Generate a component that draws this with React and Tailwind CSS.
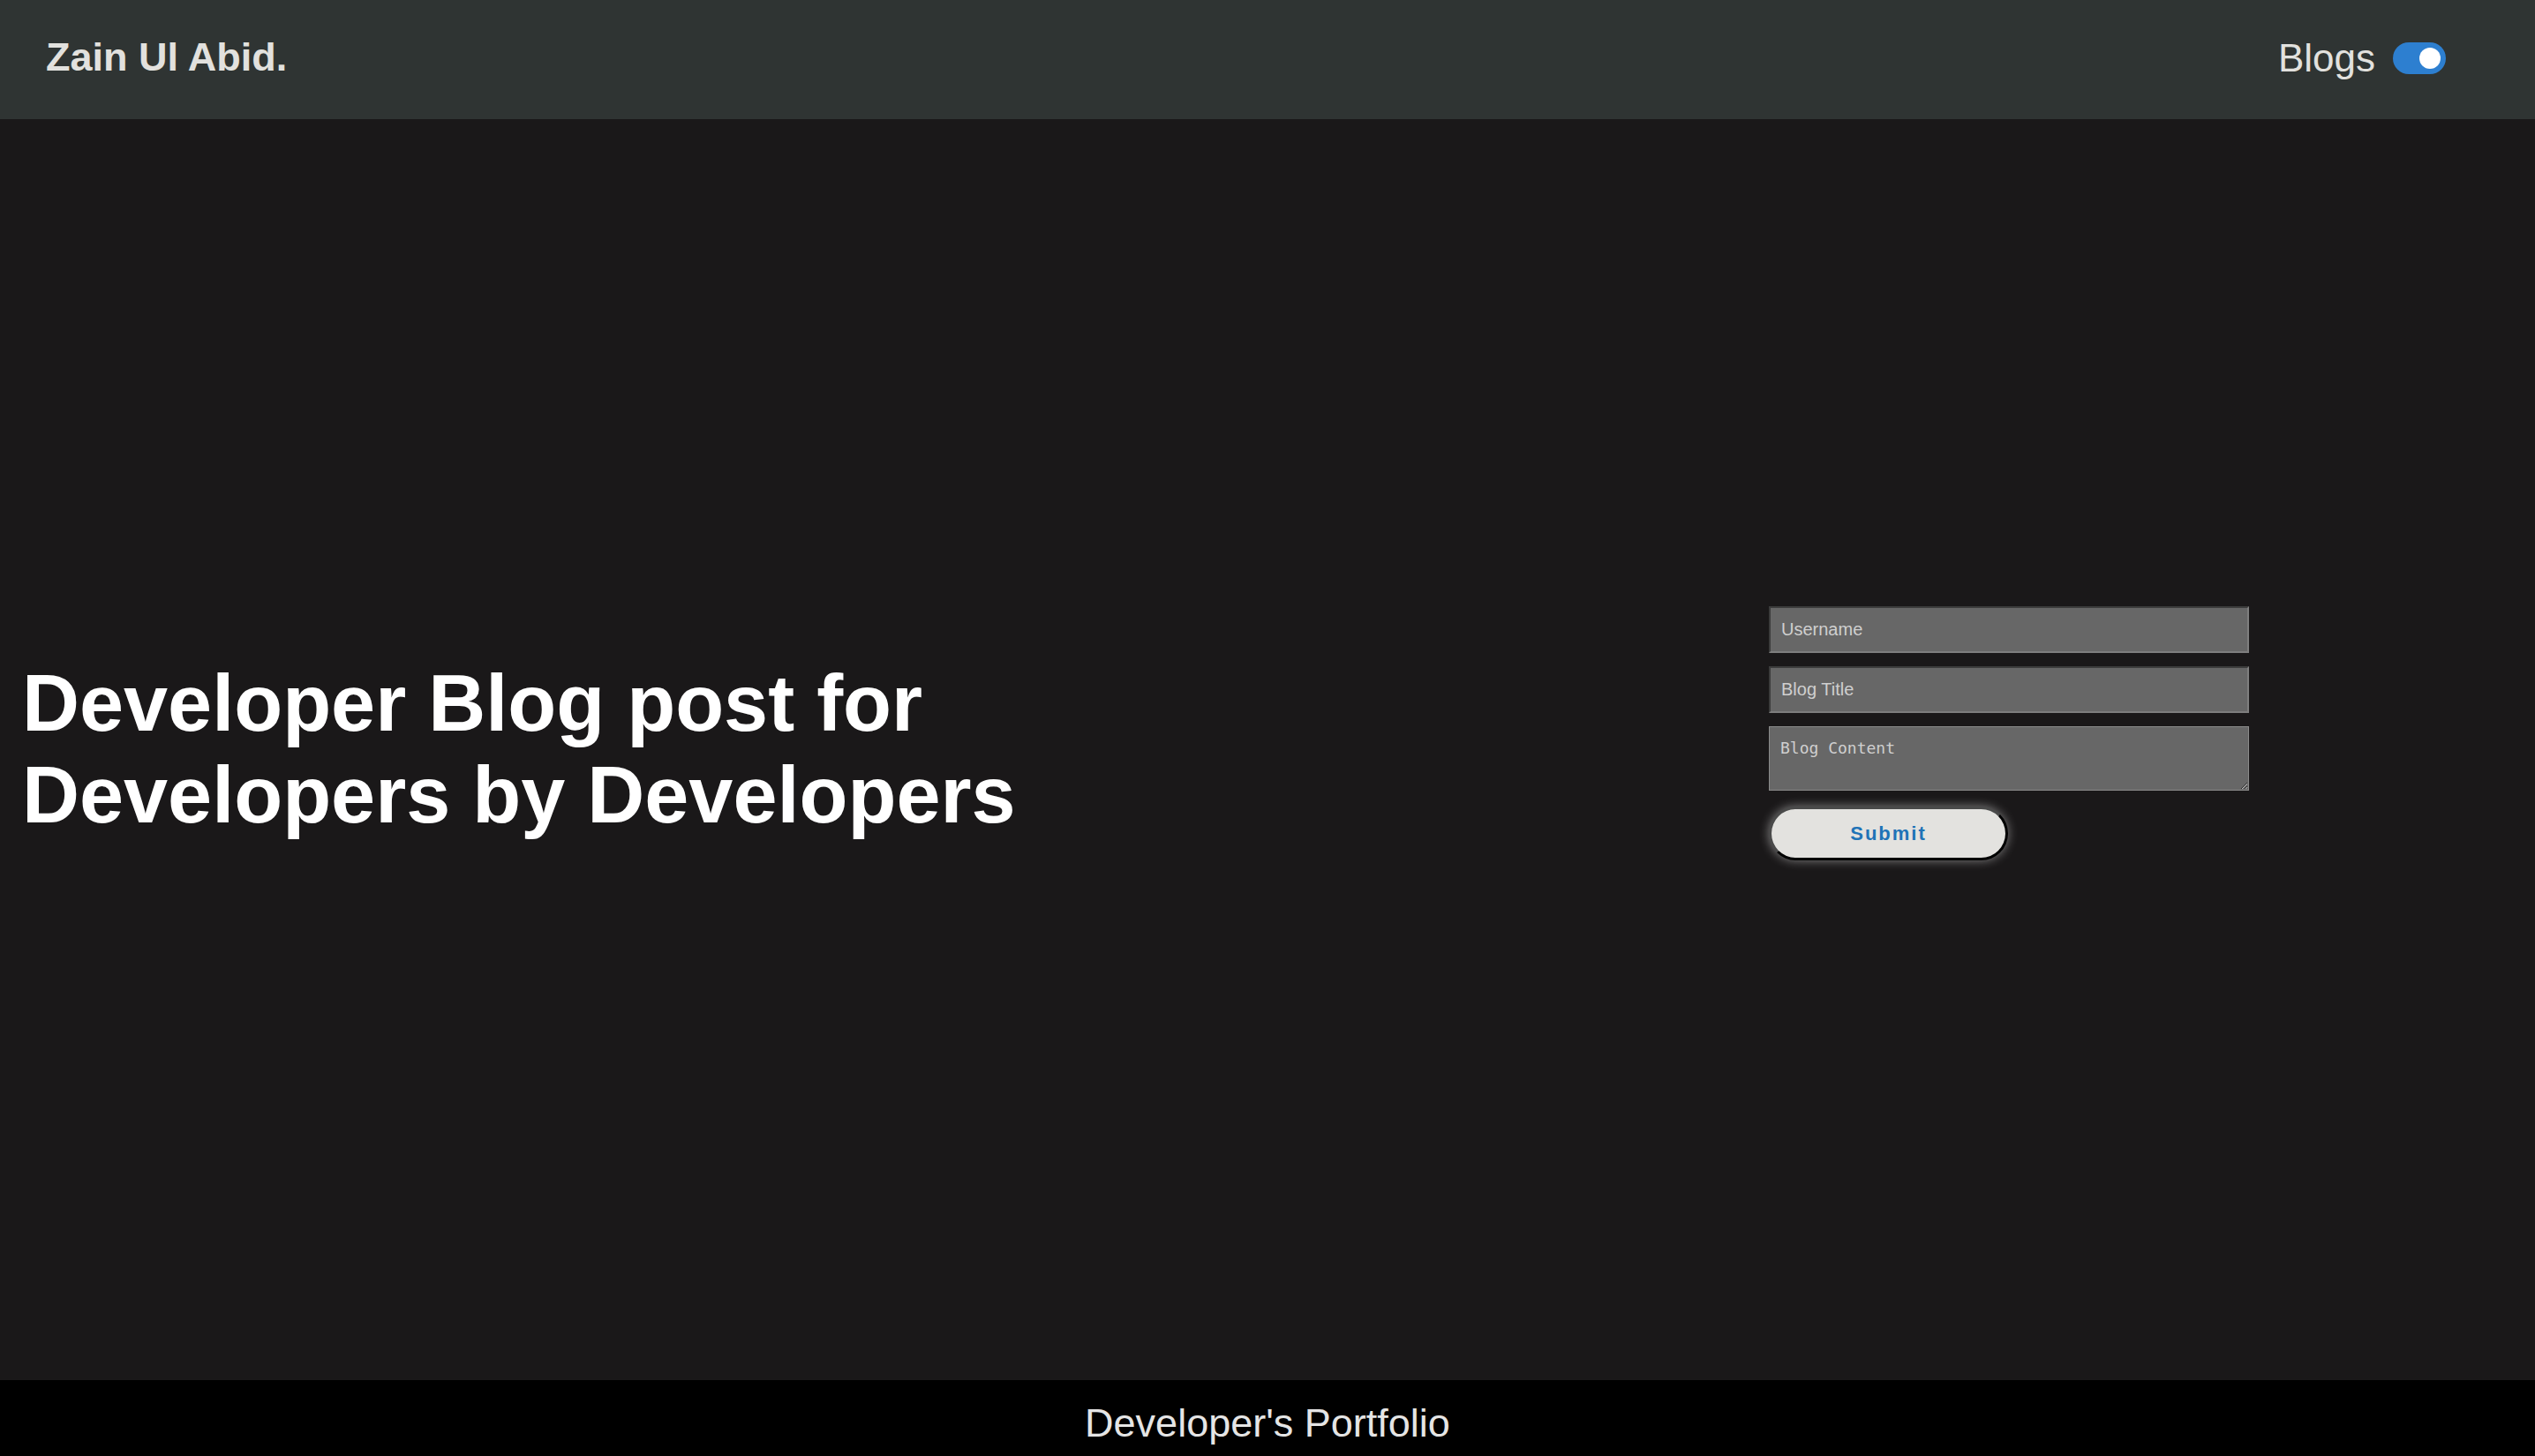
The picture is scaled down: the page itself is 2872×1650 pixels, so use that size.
import React from 'react';

function Toggle() {
    return (
        <div className="w-[60px] h-[36px] rounded-full bg-[#2d7fd0] flex items-center justify-end p-[6px]">
            <div className="w-[24px] h-[24px] rounded-full bg-white"></div>
        </div>
    );
}

function BlogForm() {
    return (
        <form className="w-[544px] ml-auto mr-[324px] mb-[37px] flex flex-col">
            <input
                type="text"
                placeholder="Username"
                className="h-[53px] bg-[#676767] border-2 border-t-[#3c3c3c] border-l-[#3c3c3c] border-b-[#7e7e7e] border-r-[#7e7e7e] px-[12px] text-[20px] text-white placeholder:text-[#cfcfcf] outline-none font-['Liberation_Sans',Arial,sans-serif]"
            />
            <input
                type="text"
                placeholder="Blog Title"
                className="mt-[15px] h-[53px] bg-[#676767] border-2 border-t-[#3c3c3c] border-l-[#3c3c3c] border-b-[#7e7e7e] border-r-[#7e7e7e] px-[12px] text-[20px] text-white placeholder:text-[#cfcfcf] outline-none font-['Liberation_Sans',Arial,sans-serif]"
            />
            <textarea
                placeholder="Blog Content"
                className="mt-[15px] h-[73px] bg-[#676767] border border-[#8a8a8a] px-[12px] pt-[13px] pb-[7px] text-[18px] leading-[22px] text-white placeholder:text-[#cfcfcf] outline-none font-['DejaVu_Sans_Mono',monospace]"
            ></textarea>
            <button
                type="button"
                className="mt-[18px] w-[271px] h-[61px] rounded-full bg-[#e3e2df] border-[3px] border-t-[#4a4a4a] border-l-[#4a4a4a] border-b-black border-r-black shadow-[0_0_12px_rgba(255,255,255,0.45)] text-[22px] font-bold tracking-[2px] text-[#1f73b7] font-['Liberation_Sans',Arial,sans-serif]"
            >
                Submit
            </button>
        </form>
    );
}

export default function App() {
    return (
        <div className="min-h-screen h-[1650px] flex flex-col bg-[#1a1819] font-['Liberation_Sans',Arial,sans-serif]">
            <header className="h-[135px] shrink-0 bg-[#2f3433] flex items-center justify-between pl-[52px] pr-[101px] pb-[6px]">
                <h1 className="text-[45px] font-bold text-[#e2e1de]">Zain Ul Abid.</h1>
                <div className="flex items-center gap-[20px] pt-[2px]">
                    <span className="text-[44px] text-[#e2e1de]">Blogs</span>
                    <Toggle />
                </div>
            </header>

            <main className="flex-1 flex items-center">
                <h2 className="pl-[25px] text-[90px] font-bold leading-[1.15] text-white">
                    Developer Blog post for
                    <br />
                    Developers by Developers
                </h2>
                <BlogForm />
            </main>

            <footer className="h-[86px] shrink-0 bg-black flex items-center justify-center pt-[12px]">
                <p className="text-[45px] text-[#e5e5e5]">Developer's Portfolio</p>
            </footer>
        </div>
    );
}
